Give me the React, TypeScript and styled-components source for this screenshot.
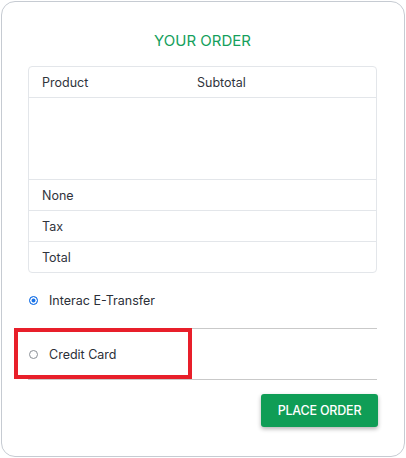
import React from "react";
import styled, { createGlobalStyle } from "styled-components";

const Global = createGlobalStyle`
  html, body { margin: 0; padding: 0; background: #fff; }
  body { font-family: "Inter", "Open Sans", sans-serif; color: #2b2f38; }
`;

const Card = styled.div`
  box-sizing: border-box;
  margin: 1px 0 0 1px;
  width: 404px;
  height: 456px;
  border: 1px solid #c6cbd2;
  border-radius: 14px;
  padding: 0 27px 0 26px;
  display: flex;
  flex-direction: column;
`;

const Title = styled.h2`
  margin: 29px 0 0;
  height: 19px;
  line-height: 19px;
  text-align: center;
  font-size: 15px;
  font-weight: 400;
  color: #14a05c;
`;

const Table = styled.div`
  margin-top: 16px;
  border: 1px solid #e3e6ea;
  border-radius: 4px;
  display: flex;
  flex-direction: column;
`;

const Row = styled.div<{ $h?: number; $last?: boolean }>`
  display: grid;
  grid-template-columns: 155px 1fr;
  align-items: center;
  height: ${(p) => p.$h ?? 30}px;
  padding-left: 13px;
  border-bottom: ${(p) => (p.$last ? "none" : "1px solid #e3e6ea")};
  font-size: 12.5px;
  color: #30343c;
`;

const Payments = styled.div`
  display: flex;
  flex-direction: column;
`;

const PayRow = styled.label<{ $h: number }>`
  position: relative;
  display: flex;
  align-items: center;
  height: ${(p) => p.$h}px;
  border-bottom: 1px solid #c9c9c9;
  font-size: 12.5px;
  color: #2b2f38;
`;

const Radio = styled.span<{ $checked?: boolean }>`
  box-sizing: border-box;
  width: 9px;
  height: 9px;
  margin-left: 1px;
  margin-right: 11px;
  border-radius: 50%;
  border: 1px solid ${(p) => (p.$checked ? "#1a73e8" : "#8a8f96")};
  background: ${(p) => (p.$checked ? "#1a73e8" : "#fff")};
  box-shadow: ${(p) => (p.$checked ? "inset 0 0 0 1.5px #fff" : "none")};
  flex: none;
`;

const Highlight = styled.div`
  position: absolute;
  left: -14px;
  top: -1px;
  width: 178px;
  height: 51px;
  box-sizing: border-box;
  border: 4px solid #e81f2a;
  pointer-events: none;
`;

const Actions = styled.div`
  display: flex;
  justify-content: flex-end;
  margin-top: 14px;
  margin-right: -1px;
`;

const Button = styled.button`
  width: 117px;
  height: 33px;
  border: none;
  border-radius: 3px;
  background: #0f9d56;
  color: #fff;
  font-family: inherit;
  font-size: 12.5px;
  font-weight: 500;
  letter-spacing: -0.2px;
  box-shadow: 0 2px 4px rgba(0, 0, 0, 0.3);
  cursor: pointer;
`;

export default function App() {
  return (
    <>
      <Global />
      <Card>
        <Title>YOUR ORDER</Title>
        <Table>
          <Row>
            <span>Product</span>
            <span>Subtotal</span>
          </Row>
          <Row $h={81} />
          <Row>
            <span>None</span>
          </Row>
          <Row>
            <span>Tax</span>
          </Row>
          <Row $last>
            <span>Total</span>
          </Row>
        </Table>
        <Payments>
          <PayRow $h={55}>
            <Radio $checked />
            <span>Interac E-Transfer</span>
          </PayRow>
          <PayRow $h={50}>
            <Radio />
            <span>Credit Card</span>
            <Highlight />
          </PayRow>
        </Payments>
        <Actions>
          <Button>PLACE ORDER</Button>
        </Actions>
      </Card>
    </>
  );
}
